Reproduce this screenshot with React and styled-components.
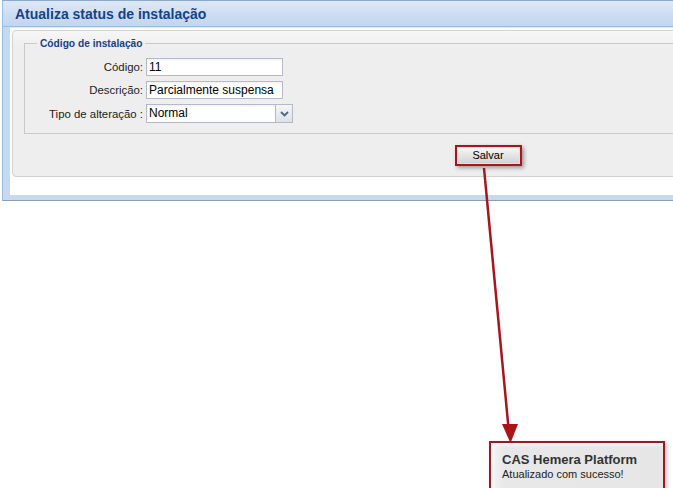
import React from 'react'
import styled, { createGlobalStyle } from 'styled-components';

const GlobalStyle = createGlobalStyle`
  html, body {
    margin: 0;
    padding: 0;
    background: #ffffff;
  }
  body {
    font-family: "Liberation Sans", Arial, sans-serif;
  }
`

const Page = styled.div`
  position: relative;
  width: 673px;
  height: 488px;
  overflow: hidden;
  background: #fff;
`

const Window = styled.div`
  margin-left: 2px;
  width: 980px;
  border: 1px solid #99bbe8;
  border-top-color: #8fa9c9;
  border-bottom-color: #8e9db3;
  background: #c7d9ef;
  padding-bottom: 5px;
`

const Header = styled.div`
  height: 25px;
  display: flex;
  align-items: center;
  padding-left: 12px;
  background: linear-gradient(to bottom, #dfe9f6 0%, #cbdcf1 60%, #c2d6ee 100%);
  border-bottom: 1px solid #99bbe8;
  h1 {
    margin: 0;
    font-size: 14px;
    font-weight: bold;
    color: #15428b;
    font-family: "Liberation Sans", Arial, sans-serif;
  }
`

const Frame = styled.div`
  margin: 0 7px;
  background: #ffffff;
  border-top: 1px solid #e4ecdc;
  padding: 2px 2px 18px 2px;
`

const Body = styled.div`
  background: linear-gradient(to bottom, #f7f7f7 0px, #eeeeee 16px, #eeeeee 100%);
  border: 1px solid #d2d2d2;
  border-radius: 4px;
  padding: 7px 0 10px 11px;
`

const FieldSet = styled.fieldset`
  margin: 0;
  border: 1px solid #c9c9c9;
  padding: 9px 10px 10px 0;
  legend {
    margin-left: 12px;
    padding: 0 3px;
    font-size: 10.2px;
    font-weight: bold;
    color: #15428b;
  }
`

const Form = styled.div`
  display: grid;
  grid-template-columns: 118px 150px;
  column-gap: 3px;
  row-gap: 5px;
  align-items: center;
`

const Label = styled.label`
  text-align: right;
  font-size: 11.4px;
  color: #222;
`

const Input = styled.div`
  box-sizing: border-box;
  width: ${p => p.w || 137}px;
  height: ${p => p.h || 18}px;
  border: 1px solid #b5b8c8;
  background: linear-gradient(to bottom, #f2f2f2 0, #ffffff 3px);
  font-size: 12px;
  line-height: ${p => (p.h || 18) - 2}px;
  padding-left: 2px;
  color: #000;
`

const Combo = styled.div`
  display: flex;
  height: 19px;
`

const Trigger = styled.div`
  box-sizing: border-box;
  width: 17px;
  height: 19px;
  border: 1px solid #b5b8c8;
  border-left: none;
  background: linear-gradient(to bottom, #f4f6f8 0%, #dde2e8 100%);
  display: flex;
  align-items: center;
  justify-content: center;
`

const Footer = styled.div`
  display: flex;
  justify-content: center;
  padding-top: 11px;
  padding-right: 21px;
`

const Highlight = styled.div`
  border: 2px solid #a8161c;
  padding: 1px;
  background: #f3dcc0;
  box-shadow: 2px 2px 4px rgba(0,0,0,0.35);
`

const Button = styled.button`
  box-sizing: border-box;
  width: 61px;
  height: 15px;
  border: none;
  background: linear-gradient(to bottom, #f7f7f7 0%, #e4e4e4 50%, #d2d4d8 100%);
  font-family: "Liberation Sans", Arial, sans-serif;
  font-size: 11px;
  color: #000;
  padding: 0;
  line-height: 15px;
  display: block;
`

const Arrow = styled.svg`
  position: absolute;
  left: 0;
  top: 0;
  pointer-events: none;
`

const Toast = styled.div`
  position: absolute;
  left: 489px;
  top: 441px;
  width: 176px;
  height: 50px;
  border: 2px solid #9c1a1f;
  background: linear-gradient(to right, #f4f4f4 0%, #e8e8e8 8%, #e6e6e6 100%);
  box-shadow: inset 2px 2px 3px rgba(255,255,255,0.9), 2px 2px 4px rgba(0,0,0,0.25);
  padding: 9px 0 0 11px;
  box-sizing: border-box;
  color: #333;
  strong {
    display: block;
    font-size: 13px;
    line-height: 15px;
  }
  span {
    display: block;
    font-size: 11px;
    line-height: 14px;
    color: #222;
  }
`

const App = () => {
  return (
    <Page>
      <GlobalStyle />
      <Window>
        <Header>
          <h1>Atualiza status de instalação</h1>
        </Header>
        <Frame>
          <Body>
            <FieldSet>
              <legend>Código de instalação</legend>
              <Form>
                <Label>Código:</Label>
                <Input>11</Input>
                <Label>Descrição:</Label>
                <Input>Parcialmente suspensa</Input>
                <Label>Tipo de alteração :</Label>
                <Combo>
                  <Input w={130} h={19}>Normal</Input>
                  <Trigger>
                    <svg width="9" height="6" viewBox="0 0 9 6">
                      <path d="M1 1 L4.5 4.5 L8 1" fill="none" stroke="#4a6785" strokeWidth="1.8" />
                    </svg>
                  </Trigger>
                </Combo>
              </Form>
            </FieldSet>
            <Footer>
              <Highlight>
                <Button>Salvar</Button>
              </Highlight>
            </Footer>
          </Body>
        </Frame>
      </Window>

      <Arrow width="673" height="488" viewBox="0 0 673 488">
        <line x1="484" y1="168" x2="508.5" y2="428" stroke="#a8141a" strokeWidth="2.5" />
        <polygon points="502,424 518,424 510.5,443" fill="#a8141a" />
      </Arrow>

      <Toast>
        <strong>CAS Hemera Platform</strong>
        <span>Atualizado com sucesso!</span>
      </Toast>
    </Page>
  )
}

export default App
